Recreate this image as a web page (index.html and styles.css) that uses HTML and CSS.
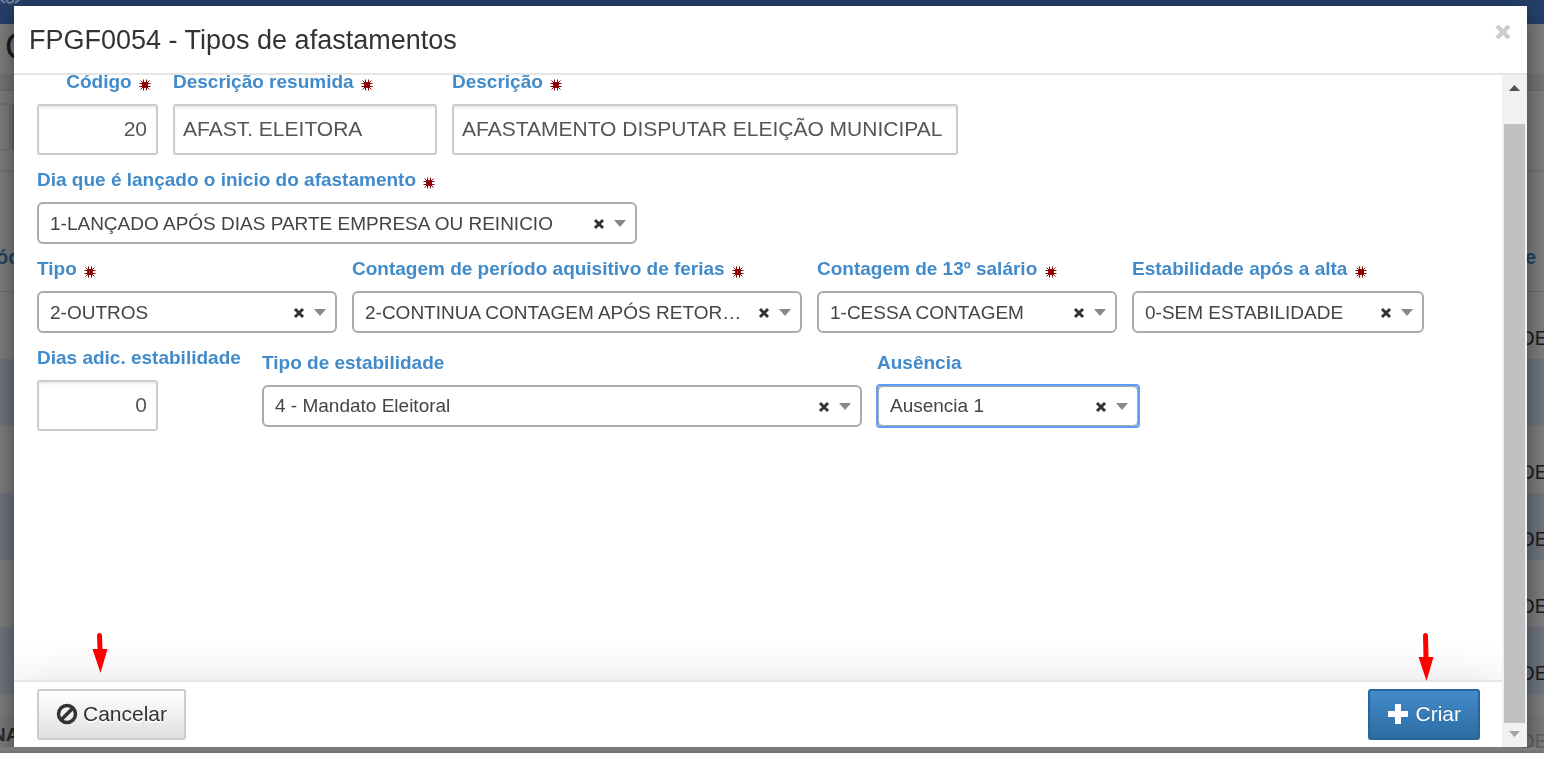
FILE: index.html
```html
<!DOCTYPE html>
<html lang="pt-BR">
<head>
<meta charset="utf-8">
<title>FPGF0054 - Tipos de afastamentos</title>
<link rel="stylesheet" href="styles.css">
</head>
<body>
<svg width="0" height="0" class="defs" aria-hidden="true">
  <symbol id="req" viewBox="0 0 12 12"><path d="M4.500 .5v11M7.500 .5v11M.5 4.500h11M.5 7.500h11M1.500 1.500l9 9M10.500 1.500l-9 9" stroke="#8b0000" stroke-width="1" fill="none"/><circle cx="6" cy="6" r="3" fill="#8b0000"/></symbol>
  <symbol id="clear" viewBox="0 0 12 12"><path d="M2 2l8 8M10 2l-8 8" stroke="#333" stroke-width="3" fill="none"/></symbol>
  <symbol id="caret" viewBox="0 0 12 7"><path d="M0 0h12L6 7z" fill="#888"/></symbol>
  <symbol id="pointer" viewBox="0 0 16 48"><path d="M5 3Q5 0 7.500 0T10 3L10.500 24H15.500L8.500 48L.5 24H5.500z" fill="#f00"/></symbol>
  <symbol id="pointer-short" viewBox="0 0 16 40"><path d="M5 3Q5 0 7.500 0T10 3L10.500 16H15.500L8.500 40L.5 16H5.500z" fill="#f00"/></symbol>
</svg>

<div class="page" aria-hidden="true">
  <div class="topbar"><svg width="20" height="4" viewBox="0 0 20 4"><path d="M1 0l4 3M6 0q4 6 8 0M15 3l4-3" stroke="#77869c" stroke-width="2" fill="none"/></svg></div>
  <div class="page-title">C</div>
  <div class="crumbs"></div>
  <div class="tools"><span class="tool"></span><span class="tool tool-dark"></span></div>
  <div class="head"><span>óc</span><span>e</span></div>
  <div class="row"><span>DE</span></div>
  <div class="row alt"></div>
  <div class="row"><span>DE</span></div>
  <div class="row alt"><span>DE</span></div>
  <div class="row"><span>DE</span></div>
  <div class="row alt"><span>DE</span></div>
  <div class="gap"></div>
  <div class="last"><b>NA</b><span>DE</span></div>
</div>

<div class="backdrop">
<main class="modal" role="dialog" aria-labelledby="title">
  <header class="modal-header">
    <h1 id="title">FPGF0054 - Tipos de afastamentos</h1>
    <button class="close" type="button" aria-label="Fechar"><svg width="16" height="16" viewBox="0 0 16 16"><path d="M2 2l12 12M14 2L2 14" stroke="#ccc" stroke-width="4.500"/></svg></button>
  </header>
  <div class="modal-body">
    <form class="sheet">
      <div class="fields">
        <div class="line">
          <div class="field w-code"><label class="right" for="codigo">Código <svg class="req"><use href="#req"/></svg></label><input class="number" id="codigo" value="20"></div>
          <div class="field w-short"><label for="resumida">Descrição resumida <svg class="req"><use href="#req"/></svg></label><input id="resumida" value="AFAST. ELEITORA"></div>
          <div class="field w-desc"><label for="descricao">Descrição <svg class="req"><use href="#req"/></svg></label><input id="descricao" value="AFASTAMENTO DISPUTAR ELEIÇÃO MUNICIPAL"></div>
        </div>
        <div class="line">
          <div class="field w-xl"><label for="dia">Dia que é lançado o inicio do afastamento <svg class="req"><use href="#req"/></svg></label>
            <div class="picker"><select id="dia"><option>1-LANÇADO APÓS DIAS PARTE EMPRESA OU REINICIO</option></select><button type="button" class="clear" aria-label="Limpar"><svg width="12" height="12"><use href="#clear"/></svg></button><svg class="caret"><use href="#caret"/></svg></div></div>
        </div>
        <div class="line">
          <div class="field w-m"><label for="tipo">Tipo <svg class="req"><use href="#req"/></svg></label>
            <div class="picker"><select id="tipo"><option>2-OUTROS</option></select><button type="button" class="clear" aria-label="Limpar"><svg width="12" height="12"><use href="#clear"/></svg></button><svg class="caret"><use href="#caret"/></svg></div></div>
          <div class="field w-l"><label for="ferias">Contagem de período aquisitivo de ferias <svg class="req"><use href="#req"/></svg></label>
            <div class="picker"><select id="ferias"><option>2-CONTINUA CONTAGEM APÓS RETOR…</option></select><button type="button" class="clear" aria-label="Limpar"><svg width="12" height="12"><use href="#clear"/></svg></button><svg class="caret"><use href="#caret"/></svg></div></div>
          <div class="field w-m"><label for="decimo">Contagem de 13º salário <svg class="req"><use href="#req"/></svg></label>
            <div class="picker"><select id="decimo"><option>1-CESSA CONTAGEM</option></select><button type="button" class="clear" aria-label="Limpar"><svg width="12" height="12"><use href="#clear"/></svg></button><svg class="caret"><use href="#caret"/></svg></div></div>
          <div class="field w-alta"><label for="alta">Estabilidade após a alta <svg class="req"><use href="#req"/></svg></label>
            <div class="picker"><select id="alta"><option>0-SEM ESTABILIDADE</option></select><button type="button" class="clear" aria-label="Limpar"><svg width="12" height="12"><use href="#clear"/></svg></button><svg class="caret"><use href="#caret"/></svg></div></div>
        </div>
        <div class="line">
          <div class="field w-days"><label for="dias">Dias adic. estabilidade</label><input class="number w-code" id="dias" value="0"></div>
          <div class="field w-xl"><label for="estab">Tipo de estabilidade</label>
            <div class="picker"><select id="estab"><option>4 - Mandato Eleitoral</option></select><button type="button" class="clear" aria-label="Limpar"><svg width="12" height="12"><use href="#clear"/></svg></button><svg class="caret"><use href="#caret"/></svg></div></div>
          <div class="field w-aus"><label for="ausencia">Ausência</label>
            <div class="picker focused"><select id="ausencia"><option>Ausencia 1</option></select><button type="button" class="clear" aria-label="Limpar"><svg width="12" height="12"><use href="#clear"/></svg></button><svg class="caret"><use href="#caret"/></svg></div></div>
        </div>
      </div>
      <footer class="modal-footer">
        <button class="btn" type="button"><svg width="22" height="22" viewBox="0 0 22 22"><circle cx="11" cy="11" r="8.500" fill="none" stroke="#333" stroke-width="3.500"/><path d="M5 17L17 5" stroke="#333" stroke-width="3.500"/></svg>Cancelar</button>
        <button class="btn primary" type="submit"><svg width="22" height="22" viewBox="0 0 22 22"><path d="M8 1h6v7h7v6h-7v7H8v-7H1V8h7z" fill="#fff"/></svg>Criar</button>
        <svg class="pointer pointer-cancel"><use href="#pointer-short"/></svg>
        <svg class="pointer pointer-create"><use href="#pointer"/></svg>
      </footer>
    </form>
    <div class="scrollbar" aria-hidden="true">
      <svg class="up" width="11" height="6" viewBox="0 0 11 6"><path d="M0 6h11L5.500 0z" fill="#505050"/></svg>
      <div class="thumb"></div>
      <svg class="down" width="11" height="6" viewBox="0 0 11 6"><path d="M0 0h11L5.500 6z" fill="#a3a3a3"/></svg>
    </div>
  </div>
</main>
</div>
</body>
</html>
```
FILE: styles.css
```css
* { box-sizing: border-box; }

body {
  margin: 0;
  background: #fff;
  color: #333;
  font-family: "Liberation Sans", Arial, sans-serif;
  font-size: 20px;
  overflow: hidden;
}

.defs { position: absolute; }

/* Dimmed page behind the dialog */
.page {
  display: flex;
  flex-direction: column;
  height: calc(100vh - 5px);
  overflow: hidden;
  background: #7f7f7f;
  border-bottom: 2px solid #747474;
  color: #1c1c1c;
}

.page > div { flex: none; }

.topbar { height: 24px; background: #254069; }
.topbar svg { display: block; }

.page-title { height: 50px; padding-left: 5px; font-size: 36px; line-height: 46px; }
.crumbs { height: 17px; background: #76777a; border-bottom: 2px solid #727272; }

.tools { display: flex; gap: 1px; height: 81px; padding-top: 12px; border-bottom: 2px solid #767676; }
.tool { width: 11px; height: 48px; border: 2px solid #757575; border-left: 0; border-radius: 0 3px 3px 0; }
.tool-dark { background: #666; }

.head {
  display: flex;
  justify-content: space-between;
  height: 120px;
  padding: 0 8px 0 0;
  border-bottom: 1px solid #6f6f6f;
  color: #214566;
  font-weight: bold;
  line-height: 170px;
}
.head span:first-child { margin-left: -4px; }

.row { height: 67px; line-height: 92px; text-align: right; }
.row span, .last span { margin-right: -4px; }
.row.alt { background: #70777f; }

.gap { height: 22px; }

.page > .last {
  display: flex;
  flex: 1;
  justify-content: space-between;
  background: #7b7b7b;
  line-height: 42px;
}
.last b { margin-left: -8px; color: #2b2b2b; font-size: 19px; line-height: 38px; }
.last span { color: #626262; line-height: 50px; }

/* Keeps the dialog and its shadow above the page only */
.backdrop {
  position: fixed;
  inset: 0 0 5px;
  display: flex;
  padding: 6px 17px 6px 14px;
  overflow: hidden;
}

.modal {
  display: flex;
  flex: 1;
  flex-direction: column;
  min-width: 0;
  background: #fff;
  box-shadow: 0 8px 23px rgba(0, 0, 0, .5);
  clip-path: inset(-20px -20px 0);
}

.modal-header {
  display: flex;
  justify-content: space-between;
  align-items: flex-start;
  height: 69px;
  padding: 18px 16px 0 15px;
  border-bottom: 2px solid #e5e5e5;
}

h1 { margin: 0; font-size: 27px; font-weight: normal; line-height: 32px; }

.close { padding: 0; border: 0; background: none; line-height: 0; }

.modal-body { display: flex; flex: 1; min-height: 0; }

.sheet { display: flex; flex: 1; flex-direction: column; min-width: 0; overflow: hidden; }

.fields {
  display: flex;
  flex: 1;
  flex-direction: column;
  gap: 10px;
  margin-top: -8px;
  padding: 0 22px 0 23px;
}

.line { display: flex; align-items: center; gap: 15px; }

.field { display: flex; flex-direction: column; gap: 7px; }

label { color: #428bca; font-size: 19px; font-weight: bold; line-height: 30px; white-space: nowrap; }
label.right { padding-right: 7px; text-align: right; }

.req { width: 12px; height: 12px; margin-left: 2px; vertical-align: -3px; }

.w-code { width: 121px; }
.w-short { width: 264px; }
.w-desc { width: 506px; }
.w-days { width: 210px; }
.w-aus { width: 262px; }
.w-alta { width: 292px; }
.w-m { width: 300px; }
.w-l { width: 450px; }
.w-xl { width: 600px; }

input {
  height: 51px;
  padding: 0 8px 2px;
  border: 2px solid #ccc;
  border-radius: 3px;
  background: #fff;
  box-shadow: inset 0 2px 2px rgba(0, 0, 0, .08);
  color: #555;
  font: 21px "Liberation Sans", Arial, sans-serif;
}
.number { padding-right: 9px; text-align: right; }

.picker { position: relative; display: flex; }
.focused { border-radius: 3px; outline: 2px solid #5e9ef8; outline-offset: -1px; }

select {
  width: 100%;
  height: 42px;
  padding: 0 48px 0 11px;
  appearance: none;
  border: 2px solid #aaa;
  border-radius: 6px;
  background: #fff;
  color: #444;
  font: 19px "Liberation Sans", Arial, sans-serif;
  text-overflow: ellipsis;
}

.clear { position: absolute; top: 16px; right: 32px; padding: 0; border: 0; background: none; line-height: 0; }
.caret { position: absolute; top: 18px; right: 11px; width: 12px; height: 7px; pointer-events: none; }

.modal-footer {
  position: relative;
  display: flex;
  justify-content: space-between;
  padding: 7px 22px 7px 23px;
  border-top: 2px solid #e5e5e5;
  background: #fff;
  box-shadow: 0 0 45px rgba(0, 0, 0, .12);
}

.btn {
  display: flex;
  align-items: center;
  gap: 5px;
  height: 51px;
  padding: 0 17px 2px;
  border: 2px solid #ccc;
  border-radius: 3px;
  background: linear-gradient(#fff, #e0e0e0);
  color: #333;
  font: 21px "Liberation Sans", Arial, sans-serif;
  text-shadow: 0 2px 0 #fff;
}

.primary {
  gap: 7px;
  border-color: #2b669a;
  background: linear-gradient(#428bca, #2d6ca2);
  color: #fff;
  text-shadow: 0 -1px 0 rgba(0, 0, 0, .2);
}

.pointer { position: absolute; top: -49px; width: 16px; height: 40px; pointer-events: none; }
.pointer-cancel { left: 78px; }
.pointer-create { right: 68px; height: 48px; }

.scrollbar {
  display: flex;
  flex-direction: column;
  align-items: center;
  width: 25px;
  padding: 10px 2px;
  background: #f1f1f1;
}
.thumb { flex: 1; width: 21px; margin: 33px 0 8px; background: #c1c1c1; }
```
